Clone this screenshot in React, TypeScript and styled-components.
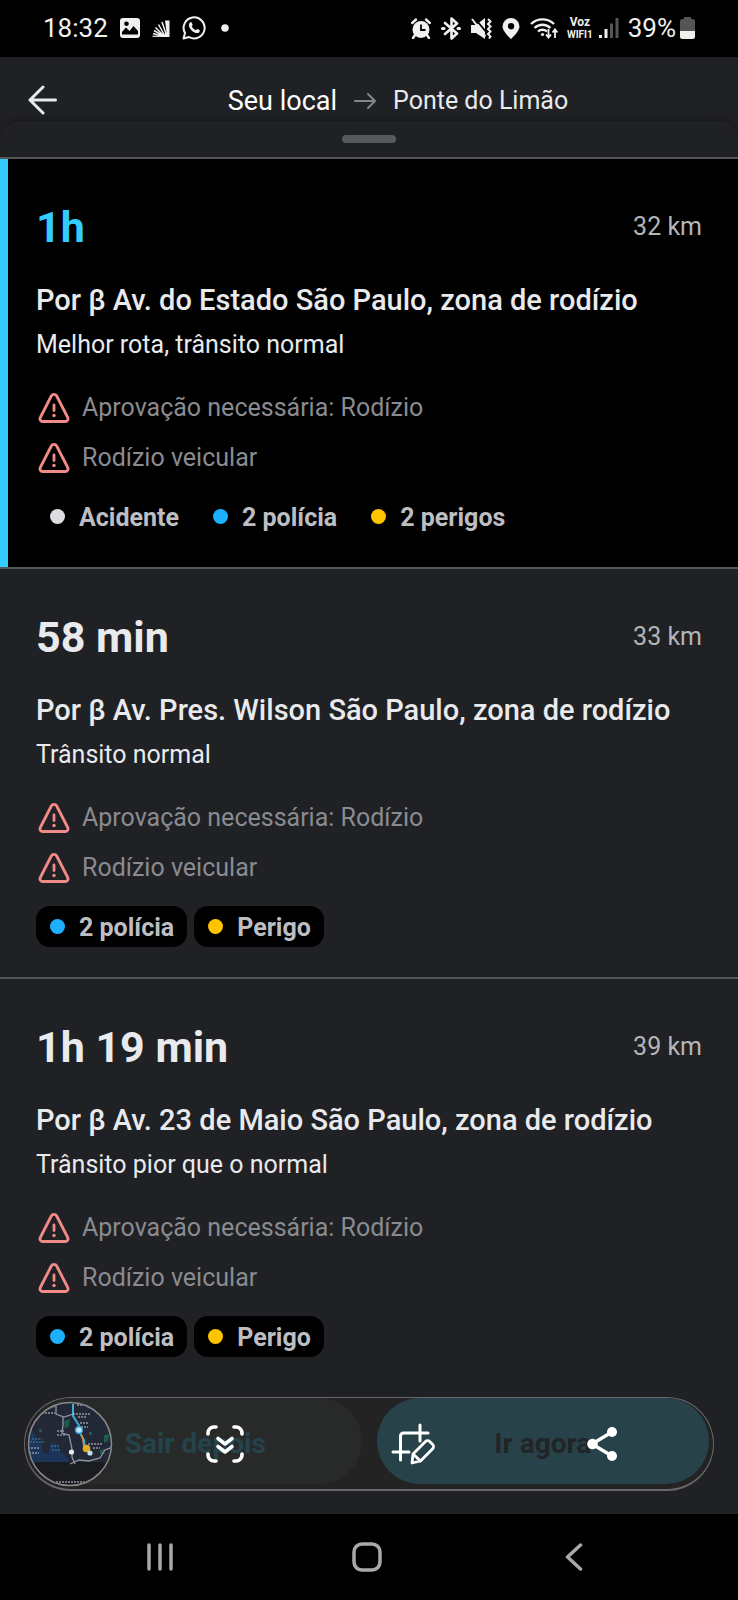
import React from "react";
import styled, { createGlobalStyle } from "styled-components";

const color = {
  black: "#000000",
  surface: "#202124",
  accent: "#33ccff",
  text: "#e8eaed",
  muted: "#8a8b90",
  line: "#55565a",
  danger: "#f28b88",
};

const GlobalStyle = createGlobalStyle`
  * { box-sizing: border-box; }
  body {
    margin: 0;
    background: ${color.black};
    color: ${color.text};
    font-family: Roboto, "Liberation Sans", sans-serif;
    font-size: 25px;
  }
  h1, h2, p, ul { margin: 0; padding: 0; font-weight: 400; }
  ul { list-style: none; }
  button { border: 0; padding: 0; background: none; color: inherit; font: inherit; cursor: pointer; }
  svg { display: block; flex: none; }
`;

const Page = styled.div`
  display: flex;
  flex-direction: column;
  min-height: 100vh;
  background: ${color.surface};
`;

const StatusBar = styled.div`
  display: flex;
  align-items: center;
  justify-content: space-between;
  height: 57px;
  padding: 0 43px 1px;
  background: ${color.black};
  color: #f0f0f0;
  font-size: 26px;
  line-height: 32px;
`;

const StatusGroup = styled.div<{ $gap: number }>`
  display: flex;
  align-items: center;
  gap: ${(p) => p.$gap}px;
`;

const Carrier = styled.span`
  display: flex;
  flex-direction: column;
  align-items: center;
  font-size: 10px;
  font-weight: 700;
  line-height: 12px;
`;

const CarrierMode = styled.span`
  font-size: 12px;
  line-height: 14px;
`;

const Header = styled.header`
  display: flex;
  align-items: center;
  height: 88px;
  padding: 0 0 0 28px;
`;

const BackButton = styled.button`
  margin-bottom: 3px;
`;

const RouteEnds = styled.h1`
  flex: 1;
  display: flex;
  align-items: center;
  justify-content: center;
  gap: 17px;
  font-size: 25px;
  line-height: 32px;
`;

const Origin = styled.span`
  color: #ffffff;
  font-size: 27px;
`;

const Sheet = styled.main`
  position: relative;
  flex: 1;
  display: flex;
  flex-direction: column;
  margin-top: -24px;
  border-radius: 20px 20px 0 0;
  background: ${color.surface};
  box-shadow: 0 -2px 6px rgba(0, 0, 0, 0.25);
`;

const Handle = styled.div`
  width: 54px;
  height: 8px;
  margin: 14px auto;
  border-radius: 4px;
  background: #58595d;
`;

const Card = styled.li<{ $selected?: boolean }>`
  padding: 40px 36px 30px;
  border-top: 2px solid ${color.line};
  background: ${(p) => (p.$selected ? color.black : color.surface)};
  box-shadow: ${(p) => (p.$selected ? `inset 8px 0 0 ${color.accent}` : "none")};
`;

const Summary = styled.div`
  display: flex;
  align-items: center;
  justify-content: space-between;
  line-height: 56px;
`;

const Duration = styled.strong<{ $selected?: boolean }>`
  font-size: 43px;
  font-weight: 700;
  color: ${(p) => (p.$selected ? color.accent : color.text)};
`;

const Distance = styled.span`
  color: #b4b5b9;
`;

const Via = styled.h2`
  margin-top: 27px;
  font-size: 29px;
  font-weight: 500;
  line-height: 36px;
`;

const Traffic = styled.p`
  margin-top: 11px;
  line-height: 32px;
`;

const Alerts = styled.ul`
  margin-top: 22px;
`;

const Alert = styled.li`
  display: flex;
  align-items: center;
  gap: 12px;
  padding-left: 2px;
  color: ${color.muted};
  line-height: 50px;
`;

const Chips = styled.ul`
  display: flex;
  gap: 7px;
  margin-top: 13px;
`;

const Chip = styled.li`
  display: flex;
  align-items: center;
  gap: 14px;
  height: 41px;
  padding: 2px 13px 0 14px;
  border-radius: 14px;
  background: ${color.black};
  color: #bdbec2;
  font-size: 25px;
  font-weight: 700;
`;

const Dot = styled.span<{ $color: string }>`
  width: 15px;
  height: 15px;
  margin-bottom: 2px;
  border-radius: 50%;
  background: ${(p) => p.$color};
`;

const Footer = styled.footer`
  position: relative;
  display: grid;
  grid-template-columns: 1fr 1fr;
  gap: 15px;
  height: 94px;
  margin: auto 24px 23px;
  padding: 0 4px 5px;
  border: 1px solid #68686a;
  border-bottom-width: 2px;
  border-radius: 47px;
  background: #232324;
`;

const DepartButton = styled.button<{ $primary?: boolean }>`
  padding-top: 4px;
  border-radius: 43px;
  font-size: 28px;
  font-weight: 700;
  background: ${(p) => (p.$primary ? "#284249" : "#282a2a")};
  color: ${(p) => (p.$primary ? "#222528" : "#24434c")};
`;

const CaptureTools = styled.div`
  position: absolute;
  inset: 0;
  display: flex;
  align-items: center;
  padding: 0 17px 0 2px;
`;

const Thumbnail = styled.button`
  width: 86px;
  margin-right: 18px;
`;

const Tool = styled.button`
  flex: 1;
  display: flex;
  justify-content: center;
  color: #ffffff;
`;

const NavBar = styled.nav`
  display: grid;
  grid-template-columns: repeat(3, 207px);
  justify-content: center;
  height: 86px;
  padding-right: 4px;
  background: ${color.black};
  color: #a9a9a9;
`;

const NavButton = styled.button`
  display: flex;
  align-items: center;
  justify-content: center;
`;

const PictureIcon = () => (
  <svg width="20" height="20" viewBox="0 0 20 20" fill="currentColor" fillRule="evenodd">
    <path d="M3 0h14a3 3 0 0 1 3 3v14a3 3 0 0 1-3 3H3a3 3 0 0 1-3-3V3a3 3 0 0 1 3-3zM2 16.500h16v-3.500l-4.500-5-4 5-3.500-3.500-4 4.500zM6.500 3.500a2.300 2.300 0 1 0 0 4.600 2.300 2.300 0 0 0 0-4.600z" />
  </svg>
);

const RaysIcon = () => (
  <svg width="18" height="17" viewBox="0 0 18 17" fill="none" stroke="currentColor" strokeWidth="1.500">
    <path d="M13 0.500h4.500V17H11L14.500 12z" fill="currentColor" stroke="none" />
    <path d="M10 2l4.500 13M6.500 4.500 13 16M3.500 7.500 12 16M2 10.500 12 16.500M1 13.500 11 16.500" />
    <path d="M0.500 16.300H12" strokeWidth="1.200" />
  </svg>
);

const WhatsAppIcon = () => (
  <svg width="24" height="24" viewBox="0 0 24 24" fill="none">
    <path d="M1.500 22.500 3 17a10.500 10.500 0 1 1 4 4z" stroke="currentColor" strokeWidth="2" strokeLinejoin="round" />
    <path fill="currentColor" d="M8.300 6.300c.5-.3 1.200-.2 1.400.3l.9 2c.2.500-.7 1.500-.9 1.700.9 1.900 2.300 3.200 4.200 4 .3-.3 1-1.500 1.500-1.300l2.100 1c.6.4.2 1.900-.4 2.400-3.300 2.700-10.700-3.300-10.200-7.700.1-1 .6-1.900 1.400-2.400z" />
  </svg>
);

const AlarmIcon = () => (
  <svg width="20" height="21" viewBox="0 0 20 21">
    <circle cx="10" cy="11.500" r="8.500" fill="currentColor" />
    <path d="M1.200 5 5 1.500M18.800 5 15 1.500M4 17l-2 3M16 17l2 3" stroke="currentColor" strokeWidth="2.400" strokeLinecap="round" />
    <path d="M10 6.500v5.500h4.500" stroke="#000" strokeWidth="1.800" fill="none" />
  </svg>
);

const BluetoothIcon = () => (
  <svg width="20" height="23" viewBox="0 0 20 23" fill="none" stroke="currentColor" strokeWidth="2.600" strokeLinejoin="round" strokeLinecap="round">
    <path d="m4 6 12 10.500-5.500 5V1.500l5.500 5L4 17" />
    <path d="M1.500 11.500h1.500M17 11.500h1.500" strokeWidth="3" />
  </svg>
);

const MuteIcon = () => (
  <svg width="21" height="21" viewBox="0 0 21 21">
    <path d="M0 7h5L14 0v21l-9-6H0z" fill="currentColor" />
    <path d="M3.500 0 16 15" stroke="#000" strokeWidth="1.800" />
    <path d="M1 1 14.500 18.500" stroke="currentColor" strokeWidth="2" />
    <path d="m17 1 2.500 2.500L17 6l2.500 2.500L17 11l2.500 2.500L17 16l2.500 2.500L18 20.500" stroke="currentColor" strokeWidth="2" fill="none" />
  </svg>
);

const PinIcon = () => (
  <svg width="18" height="21" viewBox="0 0 18 21" fill="currentColor" fillRule="evenodd">
    <path d="M9 0a8.500 8.500 0 0 1 8.500 8.500C17.500 13.500 9 21 9 21S.5 13.500.5 8.500A8.500 8.500 0 0 1 9 0zm0 5a3.200 3.200 0 1 0 0 6.400A3.200 3.200 0 0 0 9 5z" />
  </svg>
);

const WifiIcon = () => (
  <svg width="28" height="22" viewBox="0 0 28 22" fill="none" stroke="currentColor" strokeWidth="2.400">
    <path d="M1 7a16.500 16.500 0 0 1 23 0M4.500 11a11.500 11.500 0 0 1 16 0M8 14.500a6.500 6.500 0 0 1 9 0" />
    <circle cx="12.500" cy="17.500" r="1.600" fill="currentColor" stroke="none" />
    <path d="M18.500 12v8M16 17.500l2.500 3 2.500-3M25 21v-8M22.500 15.500l2.500-3 2.500 3" strokeWidth="1.800" />
  </svg>
);

const SignalIcon = () => (
  <svg width="20" height="20" viewBox="0 0 20 20">
    <path d="M1.500 20v-3M7 20v-9" stroke="currentColor" strokeWidth="3" />
    <path d="M12.500 20V5.500M18 20V0" stroke="#555555" strokeWidth="3" />
  </svg>
);

const BatteryIcon = () => (
  <svg width="15" height="22" viewBox="0 0 15 22">
    <path d="M4 0h7v2h1.500A2.500 2.500 0 0 1 15 4.500V14H0V4.500A2.500 2.500 0 0 1 2.500 2H4z" fill="#555555" />
    <path d="M0 14h15v5.500a2.500 2.500 0 0 1-2.500 2.500h-10A2.500 2.500 0 0 1 0 19.500z" fill="currentColor" />
  </svg>
);

const BackArrow = () => (
  <svg width="30" height="30" viewBox="0 0 30 30" fill="none" stroke="currentColor" strokeWidth="3" strokeLinecap="round" strokeLinejoin="round">
    <path d="M15 2 2 15l13 13M2 15h25.500" />
  </svg>
);

const SmallArrow = () => (
  <svg width="22" height="18" viewBox="0 0 22 18" fill="none" stroke="#85868b" strokeWidth="2" strokeLinecap="round" strokeLinejoin="round">
    <path d="M1 9h20M14 2l7 7-7 7" />
  </svg>
);

const WarningIcon = () => (
  <svg width="32" height="32" viewBox="0 0 32 32" fill="none" stroke={color.danger} strokeWidth="2.800" strokeLinecap="round" strokeLinejoin="round">
    <path d="M13.300 4a3.100 3.100 0 0 1 5.400 0l11 21.500a2.700 2.700 0 0 1-2.400 4H4.700a2.700 2.700 0 0 1-2.400-4z" />
    <path d="M16 13v5.500" />
    <circle cx="16" cy="23.500" r="1.700" fill={color.danger} stroke="none" />
  </svg>
);

const MapThumbnail = () => (
  <svg width="86" height="86" viewBox="0 0 86 86">
    <defs>
      <clipPath id="lens"><circle cx="43" cy="43" r="41" /></clipPath>
    </defs>
    <g clipPath="url(#lens)">
      <path fill="#222836" d="M0 0h86v86H0z" />
      <path fill="#1b3a68" d="M0 34l7-3 3 8 5 3v8l6 4 3-13 5 2 5 9 5 2 3 8h44v-10l-5-6 5-5v20H0z" opacity=".7" />
      <path fill="#1b1c20" d="M0 61h86v25H0z" />
      <path fill="#1f5b4b" d="m37 20 6-2-1 7-4 3zM77 34l6-1-2 7-4 2zM73 49l4-1v5h-4zM12 28h3v3h-3zM62 31h3v3h-3z" />
      <g fill="none" stroke="#8f94a1" strokeWidth="1.300">
        <path d="M29 3v10l8 3 9-3V3M36 16v8l-1 8 7 2 3 14v8l3 7M43 63l9-4 10 1 11-3 5-8 8-3" />
        <path d="M29 5 18 9 6 18" opacity=".5" />
      </g>
      <path d="M46 3v12l7 11 1 8 3 5 1 8" fill="none" stroke="#42afd2" strokeWidth="2" />
      <path d="m55 34 2 12" stroke="#c98a42" strokeWidth="1.500" />
      <g stroke="#c5cad5" strokeWidth="1.200" strokeDasharray="2 1">
        <path d="M50 4h12M15 12h13M46 13h17M51 16h8M53 22h8M54 26h7M30 30h7M30 34h8M61 43h14M66 47h7M1 47h11M2 52h10M29 81h30" />
      </g>
      <path d="M5 38h10M3 41h15M24 45h9M25 49h9" stroke="#3d82b4" strokeWidth="1.200" strokeDasharray="2 1" />
      <circle cx="52" cy="29" r="3.500" fill="#b9e5f7" stroke="#3897cb" strokeWidth="1.500" />
      <circle cx="59.500" cy="47.500" r="3.800" fill="#e6ae27" />
      <circle cx="63" cy="52" r="2.600" fill="#bfe0ee" />
      <circle cx="44.500" cy="51" r="2.600" fill="#e7e9ee" />
    </g>
    <circle cx="43" cy="43" r="41.500" fill="none" stroke="#89898b" strokeWidth="1.500" />
  </svg>
);

const ScrollCaptureIcon = () => (
  <svg width="38" height="38" viewBox="0 0 38 38" fill="none" stroke="currentColor" strokeWidth="3.600" strokeLinecap="round" strokeLinejoin="round">
    <path d="M2 9V8a6 6 0 0 1 6-6h2M28 2h2a6 6 0 0 1 6 6v1M36 29v1a6 6 0 0 1-6 6h-2M10 36H8a6 6 0 0 1-6-6v-1" />
    <path d="m12 13.500 7 5.500 7-5.500M12 21.500l7 5.500 7-5.500" />
  </svg>
);

const CropEditIcon = () => (
  <svg width="44" height="42" viewBox="0 0 44 42" fill="none" stroke="currentColor" strokeWidth="3" strokeLinecap="round" strokeLinejoin="round">
    <path d="M2 29h16M9.500 37V13a3 3 0 0 1 3-3H37M29 2v16" />
    <path d="m21 40 1-9 12.500-12.500a3 3 0 0 1 4.200 0l3 3a3 3 0 0 1 0 4.200L29.500 38zM22 31l7.500 7" strokeWidth="2.800" />
  </svg>
);

const ShareIcon = () => (
  <svg width="30" height="36" viewBox="0 0 30 36" fill="currentColor">
    <path d="M25 6 5 18l20 12" stroke="currentColor" strokeWidth="3.400" fill="none" />
    <circle cx="25" cy="6" r="5" />
    <circle cx="5.500" cy="18" r="5.300" />
    <circle cx="25" cy="30" r="5" />
  </svg>
);

const RecentsIcon = () => (
  <svg width="28" height="28" viewBox="0 0 28 28" stroke="currentColor" strokeWidth="3.500" strokeLinecap="round">
    <path d="M3 2v24M14 2v24M25 2v24" />
  </svg>
);

const HomeIcon = () => (
  <svg width="30" height="30" viewBox="0 0 30 30" fill="none" stroke="currentColor" strokeWidth="3.500">
    <rect x="2" y="2" width="26" height="26" rx="8" />
  </svg>
);

const NavBackIcon = () => (
  <svg width="18" height="28" viewBox="0 0 18 28" fill="none" stroke="currentColor" strokeWidth="3.500" strokeLinecap="round" strokeLinejoin="round">
    <path d="M15.500 2 2.500 14l13 12" />
  </svg>
);

type Report = { label: string; color: string };

type Route = {
  duration: string;
  distance: string;
  via: string;
  traffic: string;
  reports: Report[];
  selected?: boolean;
};

const BLUE = "#1cb0ff";
const YELLOW = "#ffc400";

const warnings = ["Aprovação necessária: Rodízio", "Rodízio veicular"];

const routes: Route[] = [
  {
    duration: "1h",
    distance: "32 km",
    via: "Por β Av. do Estado São Paulo, zona de rodízio",
    traffic: "Melhor rota, trânsito normal",
    reports: [
      { label: "Acidente", color: "#dcdde0" },
      { label: "2 polícia", color: BLUE },
      { label: "2 perigos", color: YELLOW },
    ],
    selected: true,
  },
  {
    duration: "58 min",
    distance: "33 km",
    via: "Por β Av. Pres. Wilson São Paulo, zona de rodízio",
    traffic: "Trânsito normal",
    reports: [
      { label: "2 polícia", color: BLUE },
      { label: "Perigo", color: YELLOW },
    ],
  },
  {
    duration: "1h 19 min",
    distance: "39 km",
    via: "Por β Av. 23 de Maio São Paulo, zona de rodízio",
    traffic: "Trânsito pior que o normal",
    reports: [
      { label: "2 polícia", color: BLUE },
      { label: "Perigo", color: YELLOW },
    ],
  },
];

const RouteCard = ({ route }: { route: Route }) => (
  <Card $selected={route.selected}>
    <Summary>
      <Duration $selected={route.selected}>{route.duration}</Duration>
      <Distance>{route.distance}</Distance>
    </Summary>
    <Via>{route.via}</Via>
    <Traffic>{route.traffic}</Traffic>
    <Alerts>
      {warnings.map((text) => (
        <Alert key={text}>
          <WarningIcon />
          {text}
        </Alert>
      ))}
    </Alerts>
    <Chips>
      {route.reports.map((report) => (
        <Chip key={report.label}>
          <Dot $color={report.color} />
          {report.label}
        </Chip>
      ))}
    </Chips>
  </Card>
);

export default function App() {
  return (
    <>
      <GlobalStyle />
      <Page>
        <StatusBar>
          <StatusGroup $gap={12}>
            <span>18:32</span>
            <PictureIcon />
            <RaysIcon />
            <WhatsAppIcon />
            <svg width="24" height="8" viewBox="0 0 24 8" fill="currentColor">
              <circle cx="7" cy="4" r="3.800" />
            </svg>
          </StatusGroup>
          <StatusGroup $gap={9}>
            <StatusGroup $gap={10}>
              <AlarmIcon />
              <BluetoothIcon />
              <MuteIcon />
              <PinIcon />
              <WifiIcon />
            </StatusGroup>
            <StatusGroup $gap={6}>
              <Carrier>
                <CarrierMode>Voz</CarrierMode>
                <span>WIFI1</span>
              </Carrier>
              <SignalIcon />
            </StatusGroup>
            <StatusGroup $gap={4}>
              39%
              <BatteryIcon />
            </StatusGroup>
          </StatusGroup>
        </StatusBar>
        <Header>
          <BackButton type="button" aria-label="Voltar">
            <BackArrow />
          </BackButton>
          <RouteEnds>
            <Origin>Seu local</Origin>
            <SmallArrow />
            <span>Ponte do Limão</span>
          </RouteEnds>
        </Header>
        <Sheet>
          <Handle />
          <ul>
            {routes.map((route) => (
              <RouteCard key={route.duration} route={route} />
            ))}
          </ul>
          <Footer>
            <DepartButton type="button">Sair depois</DepartButton>
            <DepartButton type="button" $primary>
              Ir agora
            </DepartButton>
            <CaptureTools>
              <Thumbnail type="button" aria-label="Captura de tela">
                <MapThumbnail />
              </Thumbnail>
              <Tool type="button" aria-label="Rolar captura">
                <ScrollCaptureIcon />
              </Tool>
              <Tool type="button" aria-label="Cortar e editar">
                <CropEditIcon />
              </Tool>
              <Tool type="button" aria-label="Compartilhar">
                <ShareIcon />
              </Tool>
            </CaptureTools>
          </Footer>
        </Sheet>
        <NavBar>
          <NavButton type="button" aria-label="Recentes">
            <RecentsIcon />
          </NavButton>
          <NavButton type="button" aria-label="Início">
            <HomeIcon />
          </NavButton>
          <NavButton type="button" aria-label="Voltar">
            <NavBackIcon />
          </NavButton>
        </NavBar>
      </Page>
    </>
  );
}
